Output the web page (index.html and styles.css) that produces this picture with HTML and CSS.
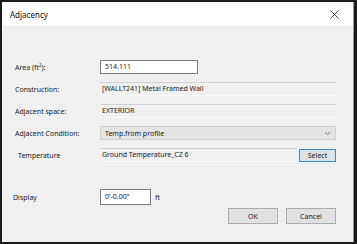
FILE: index.html
```html
<!DOCTYPE html>
<html>

<head>
    <meta charset="utf-8">
    <title>Adjacency</title>
    <link rel="stylesheet" href="styles.css">
</head>

<body>
    <div class="frame">
        <div class="titlebar">
            <span class="title">Adjacency</span>
            <svg class="close" width="9" height="9" viewBox="0 0 9 9">
                <path d="M0.5 0.5 L8.5 8.5 M8.5 0.5 L0.5 8.5" stroke="#333" stroke-width="0.9"/>
            </svg>
        </div>
        <div class="panel">
            <div class="rows">
                <div class="row">
                    <label class="lbl">Area (ft²):</label>
                    <div class="edit short">514.111</div>
                </div>
                <div class="row">
                    <label class="lbl">Construction:</label>
                    <div class="static">[WALLT241] Metal Framed Wall</div>
                </div>
                <div class="row">
                    <label class="lbl">Adjacent space:</label>
                    <div class="static">EXTERIOR</div>
                </div>
                <div class="row">
                    <label class="lbl">Adjacent Condition:</label>
                    <div class="combo">
                        <span>Temp.from profile</span>
                        <svg class="chev" width="7" height="5" viewBox="0 0 7 5">
                            <path d="M1 1.2 L3.5 3.6 L6 1.2" fill="none" stroke="#777" stroke-width="1"/>
                        </svg>
                    </div>
                </div>
                <div class="row">
                    <label class="lbl indent">Temperature</label>
                    <div class="pick">
                        <div class="static">Ground Temperature_CZ 6</div>
                        <button class="btn select">Select</button>
                    </div>
                </div>
            </div>

            <div class="row display">
                <label class="lbl outdent">Display</label>
                <div class="unit">
                    <div class="edit tiny">0'-0.00"</div>
                    <span>ft</span>
                </div>
            </div>

            <div class="actions">
                <button class="btn">OK</button>
                <button class="btn">Cancel</button>
            </div>
        </div>
    </div>
</body>

</html>
```

FILE: styles.css
```css
body {
    margin: 0;
    font-family: "Noto Sans", "Open Sans", sans-serif;
    font-size: 7px;
    color: #222;
}

.frame {
    width: 357px;
    height: 244px;
    box-sizing: border-box;
    border: 2px solid #1b1b1b;
    border-right: 3px solid #1b1b1b;
    background: #f0f0f0;
    display: flex;
    flex-direction: column;
}

.titlebar {
    height: 24px;
    background: #fff;
    display: flex;
    align-items: center;
    justify-content: space-between;
    padding: 0 14px 0 8px;
    border-right: 1px solid #999;
}

.title {
    font-size: 8px;
    color: #111;
}

.panel {
    flex: 1;
    padding: 34px 17px 0 13px;
    border-right: 1px solid #999;
}

.rows {
    display: flex;
    flex-direction: column;
    gap: 8px;
}

.row {
    display: grid;
    grid-template-columns: 85px 1fr;
    align-items: center;
    height: 14px;
}

.lbl.indent {
    padding-left: 3px;
}

.lbl.outdent {
    margin-left: -2px;
}

.edit {
    height: 14px;
    box-sizing: border-box;
    background: #fff;
    border: 1px solid #7a7a7a;
    padding: 0 4px;
    line-height: 12px;
}

.short {
    width: 98px;
}

.tiny {
    width: 51px;
    height: 16px;
    line-height: 14px;
}

.static {
    height: 14px;
    box-sizing: border-box;
    border-top: 1px solid #d2d2d2;
    border-bottom: 1px solid #fbfbfb;
    background: #f0f0f0;
    padding: 0 2px;
    line-height: 12px;
}

.combo {
    height: 14px;
    box-sizing: border-box;
    background: #e4e4e4;
    border: 1px solid #d0d0d0;
    display: flex;
    align-items: center;
    justify-content: space-between;
    padding: 0 4px;
}

.pick {
    display: grid;
    grid-template-columns: 1fr 37px;
    gap: 2px;
    align-items: center;
}

.btn {
    font-family: inherit;
    font-size: 7px;
    color: #222;
    background: #e1e1e1;
    border: 1px solid #adadad;
    padding: 0;
}

.select {
    height: 13px;
    border-color: #4a86c0;
    box-shadow: inset 0 0 0 1px #cfe2f3;
}

.display {
    margin-top: 27px;
    height: 16px;
}

.unit {
    display: flex;
    align-items: center;
    gap: 4px;
}

.actions {
    display: flex;
    justify-content: flex-end;
    gap: 8px;
    margin-top: 3px;
}

.actions .btn {
    width: 50px;
    height: 16px;
}
```
